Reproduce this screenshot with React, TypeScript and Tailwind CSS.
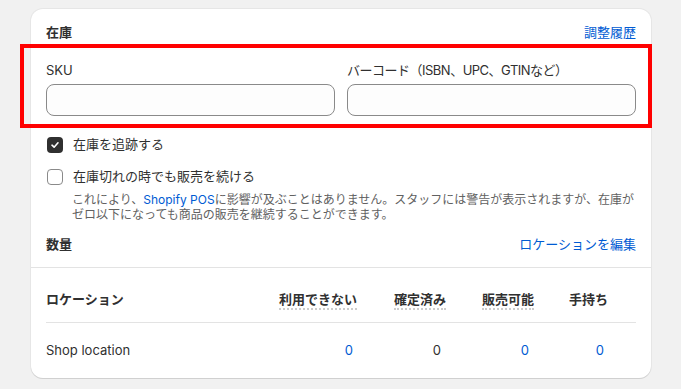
import React from 'react';

const font = { fontFamily: '"Inter", "Noto Sans CJK JP", sans-serif' };

function Check({ checked }: { checked?: boolean }) {
  if (checked) {
    return (
      <span className="w-4 h-4 rounded-[4px] bg-[#303030] flex items-center justify-center">
        <svg width="10" height="10" viewBox="0 0 10 10" fill="none">
          <path d="M2 5.2 4.1 7.2 8 2.8" stroke="#fff" strokeWidth="1.6" strokeLinecap="round" strokeLinejoin="round" />
        </svg>
      </span>
    );
  }
  return <span className="w-4 h-4 rounded-[4px] border border-[#8a8a8a] bg-white" />;
}

function Th({ children, dotted, w }: { children: React.ReactNode; dotted?: boolean; w: string }) {
  return (
    <div className={`${w} flex justify-end`}>
      <span
        className={`font-semibold leading-4 pb-[1px] border-b-2 border-dotted ${
          dotted ? 'border-[#cccccc]' : 'border-transparent'
        }`}
      >
        {children}
      </span>
    </div>
  );
}

export default function App() {
  return (
    <div className="min-h-screen bg-[#f1f1f1] pt-[9px] px-[31px] text-[13px] text-[#303030]" style={font}>
      <div className="relative bg-white rounded-xl shadow-[0_1px_0_#d0d0d0,0_0_0_1px_#e6e6e6] w-[620px]">
        <div className="px-[15px] pt-4 pb-[14px]">
          <div className="flex justify-between items-center h-4">
            <span className="font-semibold">在庫</span>
            <span className="text-[#005bd3]">調整履歴</span>
          </div>

          <div className="flex gap-3 mt-[21px]">
            <div className="flex-1">
              <div className="h-4 leading-4">SKU</div>
              <div className="mt-[6px] h-8 rounded-lg border border-[#8a8a8a] bg-[#fdfdfd]" />
            </div>
            <div className="flex-1">
              <div className="h-4 leading-4 tracking-[-0.5px]">バーコード（ISBN、UPC、GTINなど）</div>
              <div className="mt-[6px] h-8 rounded-lg border border-[#8a8a8a] bg-[#fdfdfd]" />
            </div>
          </div>

          <div className="flex items-center gap-[10px] h-5 mt-[19px] pl-[1px]">
            <Check checked />
            <span>在庫を追跡する</span>
          </div>
          <div className="flex items-center gap-[10px] h-5 mt-3 pl-[1px]">
            <Check />
            <span>在庫切れの時でも販売を続ける</span>
          </div>
          <p className="pl-[26px] mt-[5px] text-[12px] leading-[15px] text-[#616161]">
            これにより、<span className="text-[#005bd3]">Shopify POS</span>に影響が及ぶことはありません。スタッフには警告が表示されますが、在庫がゼロ以下になっても商品の販売を継続することができます。
          </p>

          <div className="flex justify-between items-center h-4 mt-[15px]">
            <span className="font-semibold">数量</span>
            <span className="text-[#005bd3]">ロケーションを編集</span>
          </div>
        </div>

        <div className="border-t border-[#e3e3e3] px-[15px]">
          <div className="flex items-start pt-[23px]">
            <div className="flex-1 font-semibold leading-4">ロケーション</div>
            <Th w="w-[100px]" dotted>利用できない</Th>
            <Th w="w-[89px]" dotted>確定済み</Th>
            <Th w="w-[88px]" dotted>販売可能</Th>
            <Th w="w-[74px]">手持ち</Th>
            <div className="w-[28px]" />
          </div>
          <div className="border-t border-[#e3e3e3] mt-3" />
          <div className="flex items-center h-[55px]">
            <div className="flex-1">Shop location</div>
            <div className="w-[100px] text-right text-[#005bd3] pr-[4px]">0</div>
            <div className="w-[89px] text-right pr-[5px]">0</div>
            <div className="w-[88px] text-right text-[#005bd3] pr-[5px]">0</div>
            <div className="w-[74px] text-right text-[#005bd3] pr-[4px]">0</div>
            <div className="w-[28px]" />
          </div>
        </div>

        <div className="absolute left-[-11px] top-[35px] w-[632px] h-[84px] border-4 border-[#ff0000] pointer-events-none" />
      </div>
    </div>
  );
}
